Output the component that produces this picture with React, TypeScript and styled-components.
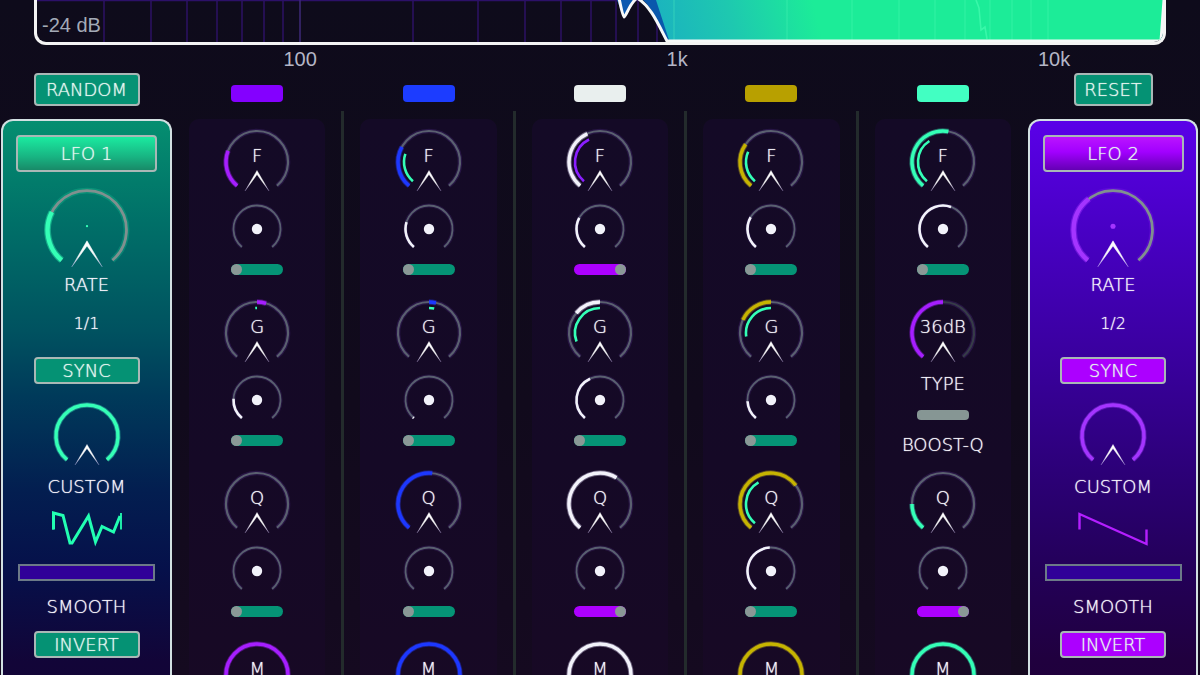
import React, { useId } from 'react';
import styled, { createGlobalStyle } from 'styled-components';

const GlobalStyle = createGlobalStyle`
  * { box-sizing: border-box; }
  body { margin: 0; background: #0f0b1c; }
`;

const FONT = `'DejaVu Sans Light', 'DejaVu Sans', sans-serif`;

const PURPLE = '#a61eff';
const BLUE = '#1c38ff';
const WHITE = '#f2f2fa';
const GOLD = '#c6b400';
const MINT = '#34ffb6';

const Page = styled.div`
  height: 100vh;
  overflow: hidden;
  background: linear-gradient(#0e0b1b, #110a1c 60%, #150a20);
  color: #f6f4fc;
  font-family: ${FONT};
  font-weight: 200;
  font-size: 18px;
  line-height: 22px;
  text-shadow: 0 0 1px currentColor;
`;

/* ---------- spectrum ---------- */

const Plot = styled.section`
  position: relative;
  height: 45px;
  margin: 0 34px;
  border: 3px solid #f4f4f4;
  border-top: 0;
  border-radius: 0 0 12px 12px;
  overflow: hidden;
  text-shadow: none;
  svg { display: block; width: 100%; height: 42px; }
`;

const PlotLabel = styled.span`
  position: absolute;
  left: 5px;
  top: 14px;
  font: 20px/22px 'Liberation Sans', sans-serif;
  color: #a3aab6;
`;

const Axis = styled.div`
  display: grid;
  grid-template-columns: repeat(3, 34.64%);
  padding-left: 9.3%;
  font: 20px/28px 'Liberation Sans', sans-serif;
  color: #b4b6c6;
  text-align: center;
  text-shadow: none;
`;

/* ---------- frame ---------- */

const Main = styled.main`
  display: grid;
  grid-template-columns: 172px 1fr 172px;
`;

const Side = styled.aside<{ $end?: boolean }>`
  display: flex;
  flex-direction: column;
  align-items: center;
  gap: 13px;
  padding: ${p => (p.$end ? '0 2px 0 0' : '0 0 0 1px')};
`;

const Button = styled.button<{ $bg: string; $w: number; $h: number }>`
  width: ${p => p.$w}px;
  height: ${p => p.$h}px;
  flex: none;
  padding: 0;
  border: 2px solid #a9b8b6;
  border-radius: 4px;
  background: ${p => p.$bg};
  color: #e6f6f0;
  font: inherit;
  line-height: 22px;
  text-shadow: inherit;
  white-space: nowrap;
`;

const LfoPanel = styled.section<{ $bg: string }>`
  flex: 1;
  align-self: stretch;
  display: flex;
  flex-direction: column;
  align-items: center;
  padding-top: 14px;
  border: 2px solid #d2e0e2;
  border-bottom: 0;
  border-radius: 12px 12px 0 0;
  background: ${p => p.$bg};
`;

const Part = styled.div<{ $gap: number }>`
  display: flex;
  flex-direction: column;
  align-items: center;
  margin-top: ${p => p.$gap}px;
`;

const RateLabel = styled.div`
  margin-top: 2px;
`;

const RateValue = styled.output`
  margin-top: 17px;
  font-size: 16px;
`;

const Smooth = styled.input`
  appearance: none;
  display: block;
  width: 137px;
  height: 17px;
  margin: 17px 0 15px;
  border: 2px solid #6c7a88;
  background: #300098;
  &::-webkit-slider-thumb { appearance: none; width: 0; height: 0; }
`;

const Wave = styled.svg`
  display: block;
  width: 72px;
  height: 36px;
  margin-top: 13px;
  overflow: visible;
`;

/* ---------- filter strips ---------- */

const Rack = styled.div`
  display: flex;
  flex-direction: column;
`;

const Chips = styled.div`
  display: flex;
  gap: 1px;
  height: 38px;
  padding-top: 12px;
`;

const ChipCell = styled.div`
  flex: 1;
  display: flex;
  justify-content: center;
`;

const Chip = styled.button<{ $color: string }>`
  width: 52px;
  height: 17px;
  padding: 0;
  border: 0;
  border-radius: 4px;
  background: ${p => p.$color};
`;

const Strips = styled.div`
  flex: 1;
  display: flex;
`;

const Divider = styled.div`
  width: 3px;
  margin: 0 -1px;
  background: #232b2c;
`;

const StripCell = styled.div`
  flex: 1;
  display: flex;
  justify-content: center;
  padding-top: 8px;
`;

const Strip = styled.section`
  width: 80%;
  padding-top: 10px;
  border-radius: 10px 10px 0 0;
  background: linear-gradient(#140a26, #150926 50%, #190924);
`;

const Group = styled.div`
  display: flex;
  flex-direction: column;
  align-items: center;
  height: 171px;
`;

const KnobBox = styled.label<{ $size: number }>`
  position: relative;
  display: block;
  width: ${p => p.$size}px;
  height: ${p => p.$size}px;
  svg { display: block; width: 100%; height: 100%; overflow: visible; }
  input { position: absolute; inset: 0; width: 100%; height: 100%; margin: 0; opacity: 0; }
`;

const KnobText = styled.span`
  position: absolute;
  left: 0;
  right: 0;
  top: 16px;
  display: flex;
  justify-content: center;
  white-space: nowrap;
`;

const MiniWrap = styled.div`
  margin: 9px 0 10px;
`;

const Toggle = styled.input`
  appearance: none;
  display: flex;
  width: 52px;
  height: 11px;
  margin: 0;
  border-radius: 6px;
  background: #059476;
  &::before {
    content: '';
    width: 11px;
    height: 11px;
    border-radius: 50%;
    background: #8a9896;
  }
  &:checked { background: #ac00ff; justify-content: flex-end; }
`;

const Caption = styled.div`
  margin-top: 7px;
  white-space: nowrap;
`;

const BoostButton = styled.button`
  width: 52px;
  height: 10px;
  margin: 15px 0 7px;
  padding: 0;
  border: 0;
  border-radius: 4px;
  background: #869694;
`;

/* ---------- knobs ---------- */

const point = (c: number, r: number, deg: number) => {
  const a = (deg * Math.PI) / 180;
  return `${(c + r * Math.sin(a)).toFixed(2)} ${(c - r * Math.cos(a)).toFixed(2)}`;
};

const arc = (c: number, r: number, from: number, to: number) =>
  `M${point(c, r, from)}A${r} ${r} 0 ${to - from > 180 ? 1 : 0} 1 ${point(c, r, to)}`;

type Range = [number, number];

interface KnobProps {
  name: string;
  color: string;
  range?: Range;
  mod?: Range;
  modColor?: string;
  track?: string;
  glow?: string;
  text?: string;
  size?: number;
  dot?: number;
}

function Knob({ name, color, range, mod, modColor = MINT, track = '#5a6070', glow = '#8050d0', text, size = 66, dot }: KnobProps) {
  const id = useId();
  return (
    <KnobBox $size={size}>
      <svg viewBox="0 0 66 66" aria-hidden="true">
        <defs>
          <linearGradient id={id} x1="0" y1="42" x2="0" y2="62" gradientUnits="userSpaceOnUse">
            <stop offset="0" stopColor="#fff" />
            <stop offset="0.6" stopColor="#fff" stopOpacity="0.95" />
            <stop offset="1" stopColor="#d8c8ff" stopOpacity="0.5" />
          </linearGradient>
        </defs>
        <path d={arc(33, 31, -140, 140)} fill="none" stroke={glow} strokeOpacity="0.18" strokeWidth="4.6" />
        <path d={arc(33, 31, -140, 140)} fill="none" stroke={track} strokeWidth="2.2" />
        {range && <path d={arc(33, 31, range[0], range[1])} fill="none" stroke={color} strokeOpacity="0.35" strokeWidth="5.4" />}
        {range && <path d={arc(33, 31, range[0], range[1])} fill="none" stroke={color} strokeWidth="3.4" />}
        {mod && <path d={arc(33, 25, mod[0], mod[1])} fill="none" stroke={modColor} strokeWidth="2.6" />}
        {dot && <circle cx="33" cy="30" r={dot} fill={color} />}
        <path d="M33 41.500L45 62L33 45.500L21 62Z" fill={`url(#${id})`} stroke={`url(#${id})`} strokeWidth="0.4" />
      </svg>
      {text && <KnobText>{text}</KnobText>}
      <input type="range" min={-140} max={140} defaultValue={range ? range[1] : -140} aria-label={name} />
    </KnobBox>
  );
}

function MiniKnob({ name, value }: { name: string; value?: number }) {
  return (
    <KnobBox $size={50}>
      <svg viewBox="0 0 50 50" aria-hidden="true">
        <path d={arc(25, 23.5, -140, 140)} fill="none" stroke="#8050d0" strokeOpacity="0.15" strokeWidth="4" />
        <path d={arc(25, 23.5, -140, 140)} fill="none" stroke="#596070" strokeWidth="1.8" />
        {value !== undefined && <path d={arc(25, 23.5, -140, value)} fill="none" stroke={WHITE} strokeWidth="2.6" />}
        <circle cx="25" cy="25" r="5.2" fill={WHITE} />
      </svg>
      <input type="range" min={-140} max={140} defaultValue={value ?? -140} aria-label={name} />
    </KnobBox>
  );
}

/* ---------- data ---------- */

interface Cell {
  range?: Range;
  mod?: Range;
  modColor?: string;
  mini?: number;
  on?: boolean;
}

interface Band {
  name: string;
  chip: string;
  color: string;
  F: Cell;
  G?: Cell;
  Q: Cell;
}

const BANDS: Band[] = [
  {
    name: 'Band 1', chip: '#8400ff', color: PURPLE,
    F: { range: [-140, -69] },
    G: { range: [0, 17], mod: [-4, 0], mini: -87 },
    Q: {},
  },
  {
    name: 'Band 2', chip: '#1c3cff', color: BLUE,
    F: { range: [-140, -61], mod: [-140, -71], mini: -73 },
    G: { range: [0, 13], mod: [0, 12], mini: -137 },
    Q: { range: [-140, 6] },
  },
  {
    name: 'Band 3', chip: '#e9efee', color: WHITE,
    F: { range: [-140, -24], mod: [-140, -26], modColor: '#8a1eff', mini: -62, on: true },
    G: { range: [-50, 0], mod: [-110, 0], mini: -25 },
    Q: { range: [-140, 32], on: true },
  },
  {
    name: 'Band 4', chip: '#b8a000', color: GOLD,
    F: { range: [-140, -55], mod: [-140, -66], mini: -60 },
    G: { range: [-65, 0], mod: [-98, 0], mini: -93 },
    Q: { range: [-140, 53], mod: [-140, -30], mini: -3 },
  },
  {
    name: 'Band 5', chip: '#42ffc2', color: MINT,
    F: { range: [-140, 10], mod: [-140, -33], mini: 20 },
    Q: { range: [-140, -90], on: true },
  },
];

function CellGroup({ band, letter, cell }: { band: Band; letter: string; cell: Cell }) {
  const name = `${band.name} ${letter}`;
  return (
    <Group>
      <Knob name={name} color={band.color} text={letter} range={cell.range} mod={cell.mod} modColor={cell.modColor} />
      <MiniWrap>
        <MiniKnob name={`${name} depth`} value={cell.mini} />
      </MiniWrap>
      <Toggle type="checkbox" defaultChecked={cell.on} aria-label={`${name} LFO`} />
    </Group>
  );
}

function BandStrip({ band }: { band: Band }) {
  return (
    <StripCell>
      <Strip aria-label={band.name}>
        <CellGroup band={band} letter="F" cell={band.F} />
        {band.G ? (
          <CellGroup band={band} letter="G" cell={band.G} />
        ) : (
          <Group>
            <Knob name="Slope" color={PURPLE} track="#363c48" text="36dB" range={[-140, 0]} />
            <Caption>TYPE</Caption>
            <BoostButton aria-label="Boost Q" />
            <Caption>BOOST-Q</Caption>
          </Group>
        )}
        <CellGroup band={band} letter="Q" cell={band.Q} />
        <CellGroup band={band} letter="M" cell={{ range: [-140, 140] }} />
      </Strip>
    </StripCell>
  );
}

interface LfoProps {
  title: string;
  rate: string;
  rateEnd: number;
  dot: number;
  color: string;
  panel: string;
  titleBg: string;
  buttonBg: string;
  wave: React.ReactNode;
}

function Lfo({ title, rate, rateEnd, dot, color, panel, titleBg, buttonBg, wave }: LfoProps) {
  return (
    <LfoPanel $bg={panel}>
      <Button $bg={titleBg} $w={141} $h={37}>{title}</Button>
      <Part $gap={16}>
        <Knob name={`${title} rate`} color={color} track="#80908f" glow={color} range={[-140, rateEnd]} size={84} dot={dot} />
        <RateLabel>RATE</RateLabel>
        <RateValue>{rate}</RateValue>
      </Part>
      <Part $gap={22}>
        <Button $bg={buttonBg} $w={106} $h={27}>SYNC</Button>
      </Part>
      <Part $gap={19}>
        <Knob name={`${title} shape`} color={color} range={[-140, 140]} />
        <Caption>CUSTOM</Caption>
        <Wave viewBox="0 0 72 36" aria-hidden="true">{wave}</Wave>
        <Smooth type="range" defaultValue={0} aria-label={`${title} smooth`} />
        <div>SMOOTH</div>
      </Part>
      <Part $gap={13}>
        <Button $bg={buttonBg} $w={106} $h={27}>INVERT</Button>
      </Part>
    </LfoPanel>
  );
}

/* Logarithmic frequency grid, 374 units per decade, 100 Hz at x = 263 */
const GRID = [30, 40, 50, 60, 70, 80, 90, 100, 200, 300, 400, 500, 600, 700, 800, 900,
  1000, 2000, 3000, 4000, 5000, 6000, 7000, 8000, 9000, 10000];
const gridX = (hz: number) => Math.round(263 + 374 * Math.log10(hz / 100));

function Spectrum() {
  return (
    <Plot aria-label="Spectrum">
      <svg viewBox="0 0 1126 42" preserveAspectRatio="none" aria-hidden="true">
        <defs>
          <linearGradient id="body" x1="622" y1="20" x2="770" y2="-20" gradientUnits="userSpaceOnUse">
            <stop offset="0" stopColor="#1bb4be" />
            <stop offset="0.45" stopColor="#1ec8b0" />
            <stop offset="1" stopColor="#1cec98" />
          </linearGradient>
        </defs>
        <path d="M0 0.5H600" stroke="#2c1068" strokeWidth="1.5" />
        {GRID.filter(hz => hz < 1000).map(hz => (
          <path key={hz} d={`M${gridX(hz)} 0V42`} stroke={hz === 100 ? '#3e2a78' : '#2c1264'} strokeWidth="1.5" />
        ))}
        <path d="M580 0L587 18L598 0Z" fill="#0a58b0" />
        <path d="M606 0C616 9 622 26 630 40H1125L1128 0Z" fill="#0a58ac" />
        <path d="M619 0L632 40H1125L1128 0Z" fill="url(#body)" />
        {GRID.filter(hz => hz >= 1000).map(hz => (
          <path key={hz} d={`M${gridX(hz)} 0V40`} stroke="#5cffc0" strokeOpacity="0.25" strokeWidth="1.4" />
        ))}
        <path d="M939 0L942 8L944 30L948 27L950 39" fill="none" stroke="#4dffb4" strokeOpacity="0.6" strokeWidth="1.6" />
        <path d="M582 -2C584 8 586 17 587 17C589 17 592 4 600 -2C614 6 622 26 630 41H1124L1127 0" fill="none" stroke="#f6f8f8" strokeWidth="3" strokeLinejoin="round" />
      </svg>
      <PlotLabel>-24 dB</PlotLabel>
    </Plot>
  );
}

export default function App() {
  return (
    <Page>
      <GlobalStyle />
      <Spectrum />
      <Axis>
        <span>100</span>
        <span>1k</span>
        <span>10k</span>
      </Axis>
      <Main>
        <Side>
          <Button $bg="#059274" $w={106} $h={33}>RANDOM</Button>
          <Lfo
            title="LFO 1"
            rate="1/1"
            rateEnd={-63}
            dot={0.9}
            color={MINT}
            panel="linear-gradient(#058e70, #007068 100px, #005260 210px, #003a5a 275px, #031e50 370px, #06104a 450px, #120538 540px, #140432)"
            titleBg="linear-gradient(#1beaa0, #18b482 60%, #188a68)"
            buttonBg="#059274"
            wave={
              <>
                <path d="M2.500 18.500V2L12 4.500L19 32H21L37.500 5L44.500 31L51 15.500L62.500 21L69 5" fill="none" stroke="#22ffb2" strokeWidth="3" />
                <path d="M2 18.500V1.500M70 18.500V2" fill="none" stroke="#22ffb2" strokeWidth="1.8" />
              </>
            }
          />
        </Side>
        <Rack>
          <Chips>
            {BANDS.map(b => (
              <ChipCell key={b.name}>
                <Chip $color={b.chip} aria-label={b.name} />
              </ChipCell>
            ))}
          </Chips>
          <Strips>
            {BANDS.map((b, i) => (
              <React.Fragment key={b.name}>
                {i > 0 && <Divider />}
                <BandStrip band={b} />
              </React.Fragment>
            ))}
          </Strips>
        </Rack>
        <Side $end>
          <Button $bg="#059274" $w={79} $h={33}>RESET</Button>
          <Lfo
            title="LFO 2"
            rate="1/2"
            rateEnd={-38}
            dot={2}
            color="#a434ff"
            panel="linear-gradient(#5a00e8, #4800c4 110px, #38009a 250px, #2c0078 350px, #230058 450px, #20003e 540px, #1c0034)"
            titleBg="linear-gradient(#ba14ff, #a200ff 45%, #6400b4)"
            buttonBg="#ac00ff"
            wave={
              <path d="M2.500 18.500V3L69.500 33V18.500" fill="none" stroke="#b41eff" strokeWidth="2.4" />
            }
          />
        </Side>
      </Main>
    </Page>
  );
}
